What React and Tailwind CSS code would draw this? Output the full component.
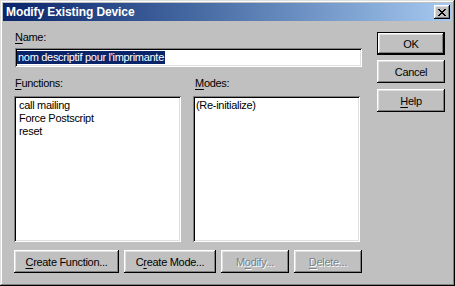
import React from "react";

// ─── Classic bevel tokens ─────────────────────────────────────────────────────
const raised =
  "shadow-[inset_-1px_-1px_#000,inset_1px_1px_#fff,inset_-2px_-2px_#808080,inset_2px_2px_#dfdfdf]";
const sunken =
  "shadow-[inset_1px_1px_#808080,inset_-1px_-1px_#fff,inset_2px_2px_#000,inset_-2px_-2px_#dfdfdf]";
const frame =
  "shadow-[inset_-1px_-1px_#000,inset_1px_1px_#dfdfdf,inset_-2px_-2px_#808080,inset_2px_2px_#fff]";

const font =
  "font-['Liberation_Sans',Arial,sans-serif] text-[11px] leading-[13px] tracking-[-0.3px]";

// ─── Button ───────────────────────────────────────────────────────────────────
const Button = ({ width, children, disabled = false, isDefault = false }) => (
  <div
    className={`flex h-[23px] shrink-0 items-center justify-center bg-[#c0c0c0] ${width} ${raised} ${
      isDefault ? "border border-black" : ""
    } ${disabled ? "text-[#808080] [text-shadow:1px_1px_0_#fff]" : "text-black"}`}
  >
    <span className="pt-[1px]">{children}</span>
  </div>
);

const Mn = ({ children }) => <u className="underline-offset-[2px]">{children}</u>;

// ─── List box ─────────────────────────────────────────────────────────────────
const ListBox = ({ items, pad }) => (
  <div className={`h-[146px] w-[167px] bg-white pt-[3px] ${pad} ${sunken}`}>
    {items.map((item) => (
      <div key={item} className="h-[13px] whitespace-nowrap">
        {item}
      </div>
    ))}
  </div>
);

export default function App() {
  return (
    <div className={`flex h-[286px] w-[455px] flex-col bg-[#c0c0c0] p-[3px] ${frame} ${font}`}>
      {/* title bar */}
      <div className="flex h-[18px] shrink-0 items-center justify-between bg-linear-to-r from-[#0a246a] to-[#a6caf0] pl-[3px] pr-[2px]">
        <span className="text-[12px] font-bold tracking-[-0.1px] text-white">Modify Existing Device</span>
        <div className={`flex h-[14px] w-[16px] items-center justify-center bg-[#c0c0c0] ${raised}`}>
          <svg width="8" height="7" viewBox="0 0 8 7" shapeRendering="crispEdges">
            <path
              d="M0 0h2v1h-2zM6 0h2v1h-2zM1 1h2v1h-2zM5 1h2v1h-2zM2 2h4v1h-4zM3 3h2v1h-2zM2 4h4v1h-4zM1 5h2v1h-2zM5 5h2v1h-2zM0 6h2v1h-2zM6 6h2v1h-2z"
              fill="#000"
            />
          </svg>
        </div>
      </div>

      {/* body */}
      <div className="flex flex-1 pl-[11px]">
        {/* left column */}
        <div className="flex w-[348px] flex-col">
          <div className="ml-[1px] mt-[10px]">
            <Mn>N</Mn>ame:
          </div>
          <div className={`ml-[1px] mt-[4px] flex h-[19px] w-[347px] items-center bg-white pl-[2px] ${sunken}`}>
            <span className="bg-[#0a246a] px-[1px] text-white">nom descriptif pour l'imprimante</span>
          </div>

          <div className="mt-[10px] flex">
            <div className="ml-[1px] w-[179px]">
              <Mn>F</Mn>unctions:
            </div>
            <div className="ml-[1px]">
              <Mn>M</Mn>odes:
            </div>
          </div>

          <div className="mt-[6px] flex gap-[12px]">
            <ListBox items={["call mailing", "Force Postscript", "reset"]} pad="pl-[5px]" />
            <ListBox items={["(Re-initialize)"]} pad="pl-[3px]" />
          </div>

          <div className="mt-[8px] flex gap-[5px]">
            <Button width="w-[105px]">
              <Mn>C</Mn>reate Function...
            </Button>
            <Button width="w-[92px]">
              C<Mn>r</Mn>eate Mode...
            </Button>
            <Button width="w-[68px]" disabled>
              M<Mn>o</Mn>dify...
            </Button>
            <Button width="w-[68px]" disabled>
              <Mn>D</Mn>elete...
            </Button>
          </div>
        </div>

        {/* right column */}
        <div className="ml-[15px] flex flex-col">
          <div className="mt-[11px]">
            <Button width="w-[68px]" isDefault>
              OK
            </Button>
          </div>
          <div className="mt-[5px]">
            <Button width="w-[68px]">Cancel</Button>
          </div>
          <div className="mt-[6px]">
            <Button width="w-[68px]">
              <Mn>H</Mn>elp
            </Button>
          </div>
        </div>
      </div>
    </div>
  );
}
